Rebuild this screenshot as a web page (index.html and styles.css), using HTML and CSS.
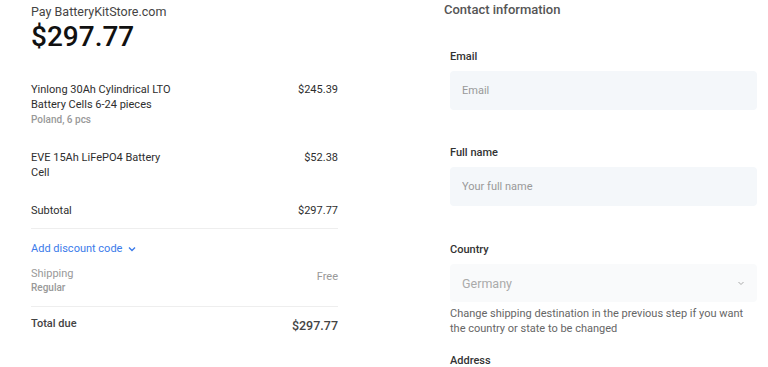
FILE: index.html
```html
<!DOCTYPE html>
<html lang="en">
<head>
  <meta charset="UTF-8">
  <meta name="viewport" content="width=device-width, initial-scale=1">
  <title>Checkout</title>
  <link rel="stylesheet" href="styles.css">
</head>
<body>
  <div class="checkout">
    <div class="summary">
      <p class="pay-to">Pay BatteryKitStore.com</p>
      <h1 class="total-amount">$297.77</h1>

      <div class="line-item">
        <div class="item-info">
          <div class="item-name">Yinlong 30Ah Cylindrical LTO Battery Cells 6-24 pieces</div>
          <div class="item-meta">Poland, 6 pcs</div>
        </div>
        <div class="item-price">$245.39</div>
      </div>

      <div class="line-item">
        <div class="item-info">
          <div class="item-name">EVE 15Ah LiFePO4 Battery Cell</div>
        </div>
        <div class="item-price">$52.38</div>
      </div>

      <div class="row subtotal">
        <span>Subtotal</span>
        <span>$297.77</span>
      </div>

      <button class="discount-btn" type="button">Add discount code
        <svg width="10" height="10" viewBox="0 0 10 10"><path d="M2 3.5 L5 6.5 L8 3.5" fill="none" stroke="currentColor" stroke-width="1.4"/></svg>
      </button>

      <div class="row shipping">
        <div>
          <div>Shipping</div>
          <div class="item-meta ship-type">Regular</div>
        </div>
        <span class="ship-price">Free</span>
      </div>

      <div class="row total-due">
        <span>Total due</span>
        <span class="due-price">$297.77</span>
      </div>
    </div>

    <form class="contact">
      <h2>Contact information</h2>

      <div class="field">
        <label for="email">Email</label>
        <input type="email" id="email" placeholder="Email">
      </div>

      <div class="field">
        <label for="fullname">Full name</label>
        <input type="text" id="fullname" placeholder="Your full name">
      </div>

      <div class="field country">
        <label for="country">Country</label>
        <div class="select-box" id="country">
          <span>Germany</span>
          <svg width="8" height="8" viewBox="0 0 8 8"><path d="M1.5 3 L4 5.5 L6.5 3" fill="none" stroke="currentColor" stroke-width="1"/></svg>
        </div>
        <p class="hint">Change shipping destination in the previous step if you want the country or state to be changed</p>
      </div>

      <div class="field address">
        <label for="address">Address</label>
      </div>
    </form>
  </div>
</body>
</html>
```

FILE: styles.css
```css
body {
  margin: 0;
  font-family: Roboto, "Liberation Sans", sans-serif;
  background: #fff;
  color: #2e2e2e;
}
.checkout {
  display: flex;
  gap: 106px;
  padding-left: 31px;
}
.summary {
  width: 307px;
}
.pay-to {
  margin: 3px 0 0;
  font-size: 12.5px;
  line-height: 17px;
  color: #444;
}
.total-amount {
  margin: 1px 0 0;
  font-size: 28px;
  line-height: 32px;
  font-weight: 500;
  color: #111;
}
.line-item {
  display: flex;
  justify-content: space-between;
  margin-top: 29px;
  font-size: 11px;
  line-height: 15px;
}
.line-item + .line-item {
  margin-top: 22px;
}
.item-name {
  width: 150px;
}
.item-meta {
  font-size: 10px;
  line-height: 16px;
  color: #999;
  font-weight: 500;
}
.row {
  display: flex;
  justify-content: space-between;
  font-size: 11px;
  line-height: 15px;
}
.subtotal {
  margin-top: 23px;
  padding-bottom: 10px;
  border-bottom: 1px solid #eee;
}
.discount-btn {
  display: flex;
  align-items: center;
  gap: 5px;
  margin-top: 12px;
  padding: 0;
  border: none;
  background: none;
  font-family: inherit;
  font-size: 11px;
  line-height: 15px;
  color: #3b7bea;
  cursor: pointer;
}
.shipping {
  margin-top: 10px;
  padding-bottom: 11px;
  border-bottom: 1px solid #eee;
  color: #999;
}
.ship-type {
  line-height: 14px;
}
.ship-price {
  margin-top: 3px;
}
.total-due {
  margin-top: 9px;
  font-weight: 500;
  color: #444;
}
.due-price {
  font-size: 12.5px;
  margin-top: 2px;
}
.contact {
  width: 313px;
}
.contact h2 {
  margin: 1px 0 0;
  font-size: 13px;
  line-height: 18px;
  font-weight: 500;
  color: #555;
}
.field {
  padding-left: 6px;
  margin-top: 30px;
}
.field + .field {
  margin-top: 35px;
}
.field.country {
  margin-top: 36px;
}
.field.address {
  margin-top: 17px;
}
label {
  display: block;
  font-size: 11px;
  line-height: 15px;
  font-weight: 500;
  color: #333;
  margin-bottom: 7px;
}
input, .select-box {
  width: 100%;
  height: 39px;
  box-sizing: border-box;
  padding: 0 12px;
  border: none;
  border-radius: 4px;
  background: #f4f7fa;
  font-family: inherit;
  font-size: 11px;
  color: #333;
}
input::placeholder {
  color: #999;
}
.select-box {
  height: 38px;
  display: flex;
  align-items: center;
  justify-content: space-between;
  background: #f9fafb;
  color: #aaa;
  font-size: 12.5px;
}
.hint {
  margin: 4px 0 0;
  font-size: 11px;
  line-height: 15px;
  color: #666;
}
```
